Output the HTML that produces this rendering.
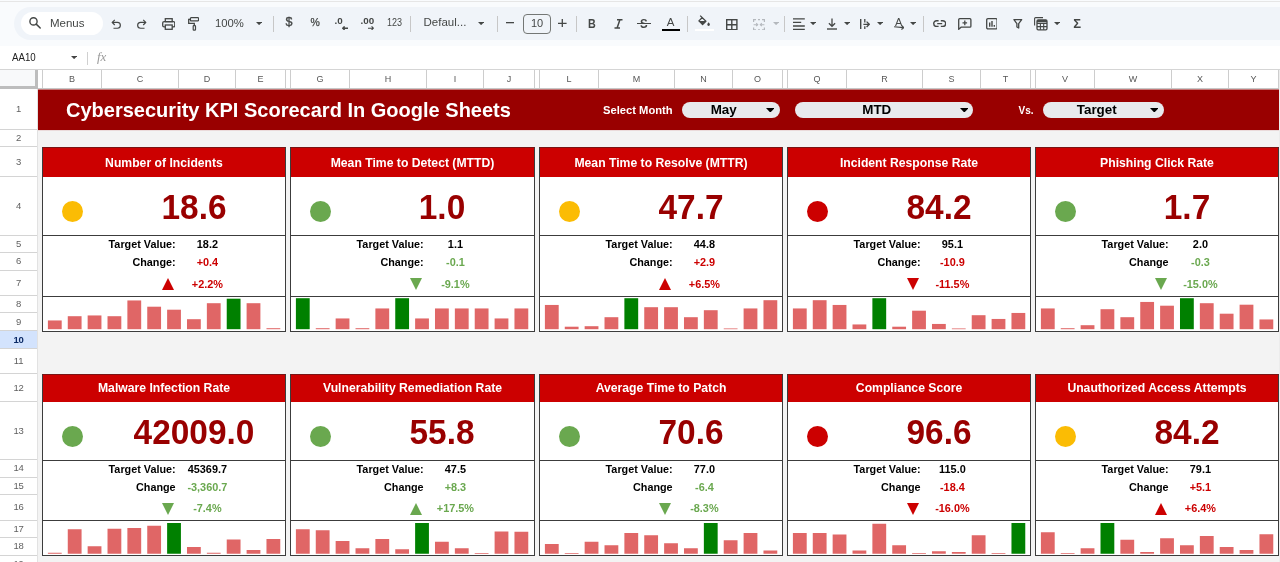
<!DOCTYPE html>
<html lang="en"><head><meta charset="utf-8"><title>Cybersecurity KPI Scorecard In Google Sheets</title>
<style>
html,body{margin:0;padding:0;}
body{width:1280px;height:562px;overflow:hidden;background:#fff;font-family:"Liberation Sans", Arial, sans-serif;position:relative;color:#000;}
.abs{position:absolute;}
#page{position:absolute;left:0;top:0;width:1280px;height:562px;overflow:hidden;will-change:transform;}
.t,.colh,.rowh,.hd{-webkit-font-smoothing:antialiased;}
.t{position:absolute;white-space:nowrap;line-height:1;}
.c{transform:translateX(-50%);}
.big.c{transform:translateX(-50%) scaleX(0.975);}
.r{transform:translateX(-100%);}
.tb{position:absolute;left:14px;top:7px;width:1300px;height:33px;background:#f0f4f9;border-radius:17px 0 0 17px;}
.colh{position:absolute;top:70px;height:19px;border-right:1px solid #cdcdcd;box-sizing:border-box;font-size:9px;color:#575757;text-align:center;line-height:19px;background:#fff;}
.rowh{position:absolute;left:0;width:37px;border-bottom:1px solid #d4d4d4;box-sizing:border-box;font-size:9.5px;color:#5f5f5f;text-align:center;background:#fff;letter-spacing:-0.3px;}
.card{position:absolute;box-sizing:border-box;border:1px solid #3c3c3c;border-top-color:#7a1414;background:#fff;}
.hd{position:absolute;left:0;right:0;top:0;background:#cc0000;color:#fff;font-weight:bold;font-size:12.2px;text-align:center;}
.ln{position:absolute;left:0;right:0;height:1px;background:#3c3c3c;}
.big{font-weight:bold;color:#990000;font-size:34.3px;}
.lab{font-weight:bold;font-size:10.8px;color:#000;}
.val{font-weight:bold;font-size:10.9px;}
.bar{position:absolute;background:#e06666;}
.pill{position:absolute;background:#e8eaed;border-radius:8px;height:15.5px;top:102px;}
.ico{position:absolute;}
.sep{position:absolute;top:16px;width:1px;height:16px;background:#c7c7c7;}

</style></head><body><div id="page">
<div class="abs" style="left:0;top:0;width:1280px;height:46px;background:#f9fbfd;"></div>
<div class="abs" style="left:0;top:1px;width:1280px;height:1px;background:#e6e6e6;"></div>
<div class="tb"></div>
<div class="abs" style="left:20.5px;top:12px;width:82px;height:23px;background:#fff;border-radius:12px;"></div>
<svg class="ico" style="left:28px;top:16.4px" width="14" height="14" viewBox="0 0 14 14"><circle cx="5.5" cy="5.4" r="3.6" fill="none" stroke="#444746" stroke-width="1.4"/><path d="M8.2 8.1L12.2 12.0" stroke="#444746" stroke-width="1.5" stroke-linecap="round"/></svg>
<div class="t" style="left:50px;top:18.1px;font-size:11.5px;color:#444746;">Menus</div>
<svg class="ico" style="left:111.2px;top:18.4px" width="11" height="11" viewBox="0 0 11 12"><path d="M1 4.8H6.5a3.2 3.2 0 0 1 0 6.4H2.2" fill="none" stroke="#444746" stroke-width="1.3"/><path d="M3.6 2L0.9 4.8L3.6 7.6" fill="none" stroke="#444746" stroke-width="1.3"/></svg>
<svg class="ico" style="left:136px;top:18.4px" width="11" height="11" viewBox="0 0 11 12"><path d="M10 4.8H4.5a3.2 3.2 0 0 0 0 6.4H8.8" fill="none" stroke="#444746" stroke-width="1.3"/><path d="M7.4 2L10.1 4.8L7.4 7.6" fill="none" stroke="#444746" stroke-width="1.3"/></svg>
<svg class="ico" style="left:161.5px;top:18px" width="13.5" height="12" viewBox="0 0 13.5 12"><rect x="3.3" y="0.7" width="6.9" height="3" fill="none" stroke="#444746" stroke-width="1.3"/><rect x="0.7" y="3.7" width="12.1" height="5.2" rx="1.4" fill="none" stroke="#444746" stroke-width="1.3"/><rect x="3.3" y="7" width="6.9" height="4.3" fill="#f0f4f9" stroke="#444746" stroke-width="1.3"/></svg>
<svg class="ico" style="left:187.5px;top:17px" width="11.5" height="14" viewBox="0 0 11.5 14"><rect x="2.4" y="0.7" width="8.2" height="3.2" rx="0.8" fill="none" stroke="#444746" stroke-width="1.3"/><path d="M2.4 2.3H0.7V6.3H6.3V8.6" fill="none" stroke="#444746" stroke-width="1.3"/><rect x="5.2" y="8.6" width="2.3" height="4.6" rx="0.6" fill="none" stroke="#444746" stroke-width="1.2"/></svg>
<div class="t" style="left:215px;top:17.5px;font-size:11.3px;color:#444746;">100%</div>
<svg class="ico" style="left:255.5px;top:22px" width="6.2" height="3.2" viewBox="0 0 6.2 3.2"><path d="M0 0h6.2L3.1 3.2z" fill="#444746"/></svg>
<div class="sep" style="left:273px;"></div>
<div class="t" style="left:285.6px;top:16px;font-size:12.5px;color:#444746;-webkit-text-stroke:0.35px #444746;">$</div>
<div class="t" style="left:310.5px;top:17px;font-size:10.5px;color:#444746;-webkit-text-stroke:0.25px #444746;">%</div>
<div class="t" style="left:334.6px;top:16px;font-size:9.8px;color:#444746;font-weight:bold;letter-spacing:0px;">.0</div>
<svg class="ico" style="left:342px;top:26px" width="6.2" height="4.4" viewBox="0 0 6.2 4.4"><path d="M6.2 2.2H1M2.6 0.4L0.8 2.2L2.6 4" fill="none" stroke="#444746" stroke-width="1.4"/></svg>
<div class="t" style="left:360.6px;top:16px;font-size:9.8px;color:#444746;font-weight:bold;letter-spacing:0px;">.00</div>
<svg class="ico" style="left:367.5px;top:26px" width="6.2" height="4.4" viewBox="0 0 6.2 4.4"><path d="M0 2.2H5.2M3.6 0.4L5.4 2.2L3.6 4" fill="none" stroke="#444746" stroke-width="1.1"/></svg>
<div class="t" style="left:387.2px;top:18.2px;font-size:10px;color:#444746;transform-origin:0 0;transform:scaleX(0.9);">123</div>
<div class="sep" style="left:410px;"></div>
<div class="t" style="left:423.5px;top:17px;font-size:11.5px;color:#444746;">Defaul...</div>
<svg class="ico" style="left:478px;top:22px" width="6.2" height="3.2" viewBox="0 0 6.2 3.2"><path d="M0 0h6.2L3.1 3.2z" fill="#444746"/></svg>
<div class="sep" style="left:497px;"></div>
<svg class="ico" style="left:506px;top:22.3px" width="8" height="1.3" viewBox="0 0 8 1.3"><rect width="8" height="1.3" fill="#444746"/></svg>
<div class="abs" style="left:523px;top:14px;width:27.5px;height:19.5px;box-sizing:border-box;border:1px solid #747775;border-radius:4px;"></div>
<div class="t" style="left:531px;top:18px;font-size:11px;color:#444746;">10</div>
<svg class="ico" style="left:558px;top:18.8px" width="8.6" height="8.6" viewBox="0 0 8.6 8.6"><path d="M4.3 0V8.6M0 4.3H8.6" stroke="#444746" stroke-width="1.3"/></svg>
<div class="sep" style="left:576px;"></div>
<div class="t" style="left:588.2px;top:18.1px;font-size:12.2px;color:#444746;font-weight:bold;transform-origin:0 0;transform:scaleX(0.88);">B</div>
<svg class="ico" style="left:613.5px;top:19px" width="9" height="9.6" viewBox="0 0 9 9.6"><path d="M3 0.65H8.5M0.5 8.95H6M5.9 0.65L3.1 8.95" fill="none" stroke="#444746" stroke-width="1.5"/></svg>
<div class="t" style="left:639.9px;top:16.8px;font-size:13.5px;color:#444746;font-weight:bold;transform-origin:0 0;transform:scaleX(0.85);">S</div>
<div class="abs" style="left:637px;top:22.5px;width:13.5px;height:1.2px;background:#444746;"></div>
<div class="abs" style="left:640px;top:23.7px;width:8px;height:1.1px;background:#f0f4f9;"></div>
<div class="t" style="left:666.8px;top:16.7px;font-size:11.5px;color:#444746;">A</div>
<div class="abs" style="left:662px;top:28.5px;width:18px;height:2.8px;background:#000;"></div>
<div class="sep" style="left:687px;"></div>
<svg class="ico" style="left:697.5px;top:15px" width="12.5" height="11.5" viewBox="0 0 12.5 11.5"><path d="M2.2 0.6L7.9 6.3L4.6 9.6L0.9 5.9L4.6 2.2" fill="none" stroke="#444746" stroke-width="1.3" stroke-linejoin="round"/><path d="M1.2 6.1H8L4.6 9.5z" fill="#444746"/><path d="M10.6 7.3c0.8 1 1.3 1.7 1.3 2.3a1.3 1.3 0 0 1 -2.6 0c0-0.6 0.5-1.3 1.3-2.3z" fill="#444746"/></svg>
<div class="abs" style="left:695px;top:28.5px;width:18.5px;height:2.8px;background:#fff;"></div>
<svg class="ico" style="left:726px;top:18.5px" width="11.6" height="11.4" viewBox="0 0 11.6 11.4"><rect x="0.7" y="0.7" width="10.2" height="10" fill="none" stroke="#444746" stroke-width="1.4"/><path d="M5.8 0.7V10.7M0.7 5.7H10.9" stroke="#444746" stroke-width="1.4"/></svg>
<svg class="ico" style="left:752.8px;top:18.5px" width="12" height="11.4" viewBox="0 0 12 11.4"><path d="M0.6 3V0.6H3M5 0.6H7M9 0.6H11.4V3M11.4 8.4V10.8H9M7 10.8H5M3 10.8H0.6V8.4" fill="none" stroke="#b4b8bd" stroke-width="1.2"/><path d="M0.6 5.7H4.6M3.2 4.2L4.7 5.7L3.2 7.2M11.4 5.7H7.4M8.8 4.2L7.3 5.7L8.8 7.2" fill="none" stroke="#b4b8bd" stroke-width="1.1"/></svg>
<svg class="ico" style="left:772.5px;top:22px" width="6.2" height="3.2" viewBox="0 0 6.2 3.2"><path d="M0 0h6.2L3.1 3.2z" fill="#b4b8bd"/></svg>
<div class="sep" style="left:784px;"></div>
<svg class="ico" style="left:793px;top:18px" width="11.8" height="12" viewBox="0 0 11.8 12"><path d="M0 0.9H11.8M0 4.4H8.2M0 8H11.8M0 11.4H11.8" stroke="#444746" stroke-width="1.3"/></svg>
<svg class="ico" style="left:810.3px;top:22px" width="6.2" height="3.2" viewBox="0 0 6.2 3.2"><path d="M0 0h6.2L3.1 3.2z" fill="#444746"/></svg>
<svg class="ico" style="left:826.6px;top:18px" width="10" height="12" viewBox="0 0 10 12"><path d="M5 0.4V8M1.9 5.2L5 8.3L8.1 5.2" fill="none" stroke="#444746" stroke-width="1.3"/><path d="M0 11H10" stroke="#444746" stroke-width="1.4"/></svg>
<svg class="ico" style="left:844px;top:22px" width="6.2" height="3.2" viewBox="0 0 6.2 3.2"><path d="M0 0h6.2L3.1 3.2z" fill="#444746"/></svg>
<svg class="ico" style="left:860px;top:18.6px" width="10.2" height="10.6" viewBox="0 0 10.2 10.6"><path d="M0.7 0V10.6" stroke="#444746" stroke-width="1.4"/><path d="M4.8 0V3.4M4.8 7.2V10.6" stroke="#444746" stroke-width="1.3"/><path d="M3.4 5.3H9M6.6 2.6L9.3 5.3L6.6 8" fill="none" stroke="#444746" stroke-width="1.3"/></svg>
<svg class="ico" style="left:877.3px;top:22px" width="6.2" height="3.2" viewBox="0 0 6.2 3.2"><path d="M0 0h6.2L3.1 3.2z" fill="#444746"/></svg>
<div class="t" style="left:895px;top:16.6px;font-size:11px;color:#444746;">A</div>
<svg class="ico" style="left:893.5px;top:25.4px" width="10.8" height="4.4" viewBox="0 0 10.8 4.4"><path d="M0 2.2H9.6M7.6 0.3L9.8 2.3L7.6 4.2" fill="none" stroke="#444746" stroke-width="1.2" transform="rotate(5 5 2.2)"/></svg>
<svg class="ico" style="left:910px;top:22px" width="6.2" height="3.2" viewBox="0 0 6.2 3.2"><path d="M0 0h6.2L3.1 3.2z" fill="#444746"/></svg>
<div class="sep" style="left:923px;"></div>
<svg class="ico" style="left:933px;top:20.2px" width="13.4" height="7.2" viewBox="0 0 13.4 7.2"><path d="M5.6 0.7H3.6a2.9 2.9 0 0 0 0 5.8H5.6M7.8 0.7H9.8a2.9 2.9 0 0 1 0 5.8H7.8M4.2 3.6H9.2" fill="none" stroke="#444746" stroke-width="1.4"/></svg>
<svg class="ico" style="left:958px;top:18px" width="13.6" height="12.2" viewBox="0 0 13.6 12.2"><path d="M0.7 11.4V1.7a1 1 0 0 1 1-1H11.9a1 1 0 0 1 1 1V8.2a1 1 0 0 1 -1 1H3z" fill="none" stroke="#444746" stroke-width="1.3" stroke-linejoin="round"/><path d="M6.8 2.6V7.2M4.5 4.9H9.1" stroke="#444746" stroke-width="1.3"/></svg>
<svg class="ico" style="left:985.5px;top:18px" width="11.8" height="11.6" viewBox="0 0 11.8 11.6"><rect x="0.7" y="0.7" width="10.4" height="10.2" rx="1.2" fill="none" stroke="#444746" stroke-width="1.3"/><path d="M3.7 4.4V8.8M6 3V8.8M8.3 6.9V8.8" stroke="#444746" stroke-width="1.4"/></svg>
<svg class="ico" style="left:1013px;top:19px" width="9.6" height="10" viewBox="0 0 9.6 10"><path d="M0.9 0.7H8.7L5.7 4.6V9L3.9 8V4.6z" fill="none" stroke="#444746" stroke-width="1.3" stroke-linejoin="round"/></svg>
<svg class="ico" style="left:1034.3px;top:17.4px" width="13.6" height="13.4" viewBox="0 0 13.6 13.4"><path d="M0.6 8.6V1.6a1 1 0 0 1 1-1H9" fill="none" stroke="#444746" stroke-width="1.1"/><rect x="3" y="3" width="10" height="9.8" rx="1.2" fill="none" stroke="#444746" stroke-width="1.3"/><path d="M3 6.4H13M3 9.6H13M6.4 6.4V12.8M9.7 6.4V12.8" stroke="#444746" stroke-width="1.1"/><rect x="3" y="3" width="10" height="2.2" fill="#444746"/></svg>
<svg class="ico" style="left:1053.5px;top:22px" width="6.2" height="3.2" viewBox="0 0 6.2 3.2"><path d="M0 0h6.2L3.1 3.2z" fill="#444746"/></svg>
<div class="t" style="left:1073.3px;top:16.6px;font-size:13px;color:#444746;font-weight:bold;">Σ</div>
<div class="abs" style="left:0;top:46px;width:1280px;height:23px;background:#fff;"></div>
<div class="t" style="left:12px;top:53.2px;font-size:10px;color:#222;transform-origin:0 0;transform:scaleX(0.97);">AA10</div>
<svg class="ico" style="left:70.5px;top:56px" width="6.2" height="3.2" viewBox="0 0 6.2 3.2"><path d="M0 0h6.2L3.1 3.2z" fill="#444"/></svg>
<div class="abs" style="left:87px;top:52px;width:1px;height:13px;background:#d0d0d0;"></div>
<div class="t" style="left:97px;top:50px;font-size:13px;color:#9a9a9a;font-style:italic;font-family:'Liberation Serif',serif;">fx</div>
<div class="abs" style="left:0;top:69px;width:1280px;height:1px;background:#d5d5d5;"></div>
<div class="abs" style="left:38px;top:89px;width:1242px;height:473px;background:#f3f3f3;"></div>
<div class="abs" style="left:0;top:70px;width:38px;height:19px;background:#f8f9fa;border-right:3px solid #bdbdbd;border-bottom:3px solid #bdbdbd;box-sizing:border-box;"></div>
<div class="colh" style="left:39px;width:4px;"></div>
<div class="colh" style="left:43px;width:59px;">B</div>
<div class="colh" style="left:102px;width:77px;">C</div>
<div class="colh" style="left:179px;width:57px;">D</div>
<div class="colh" style="left:236px;width:50px;">E</div>
<div class="colh" style="left:286px;width:5px;"></div>
<div class="colh" style="left:291px;width:59px;">G</div>
<div class="colh" style="left:350px;width:77px;">H</div>
<div class="colh" style="left:427px;width:57px;">I</div>
<div class="colh" style="left:484px;width:51px;">J</div>
<div class="colh" style="left:535px;width:5px;"></div>
<div class="colh" style="left:540px;width:59px;">L</div>
<div class="colh" style="left:599px;width:76px;">M</div>
<div class="colh" style="left:675px;width:58px;">N</div>
<div class="colh" style="left:733px;width:50px;">O</div>
<div class="colh" style="left:783px;width:5px;"></div>
<div class="colh" style="left:788px;width:59px;">Q</div>
<div class="colh" style="left:847px;width:76px;">R</div>
<div class="colh" style="left:923px;width:58px;">S</div>
<div class="colh" style="left:981px;width:50px;">T</div>
<div class="colh" style="left:1031px;width:5px;"></div>
<div class="colh" style="left:1036px;width:59px;">V</div>
<div class="colh" style="left:1095px;width:77px;">W</div>
<div class="colh" style="left:1172px;width:57px;">X</div>
<div class="colh" style="left:1229px;width:50px;">Y</div>
<div class="abs" style="left:38px;top:88px;width:1242px;height:1px;background:#c7c7c7;"></div>
<div class="rowh" style="top:89px;height:41px;line-height:40px;">1</div>
<div class="rowh" style="top:130px;height:17px;line-height:16px;">2</div>
<div class="rowh" style="top:147px;height:30px;line-height:29px;">3</div>
<div class="rowh" style="top:177px;height:58.5px;line-height:57.5px;">4</div>
<div class="rowh" style="top:235.5px;height:17.5px;line-height:16.5px;">5</div>
<div class="rowh" style="top:253px;height:17.5px;line-height:16.5px;">6</div>
<div class="rowh" style="top:270.5px;height:25.5px;line-height:24.5px;">7</div>
<div class="rowh" style="top:296px;height:17px;line-height:16px;">8</div>
<div class="rowh" style="top:313px;height:18px;line-height:17px;">9</div>
<div class="rowh" style="top:331px;height:18px;line-height:17px;background:#d3e3fd;font-weight:bold;color:#0b2a66;">10</div>
<div class="rowh" style="top:349px;height:25px;line-height:24px;">11</div>
<div class="rowh" style="top:374px;height:28px;line-height:27px;">12</div>
<div class="rowh" style="top:402px;height:58px;line-height:57px;">13</div>
<div class="rowh" style="top:460px;height:17.5px;line-height:16.5px;">14</div>
<div class="rowh" style="top:477.5px;height:17.5px;line-height:16.5px;">15</div>
<div class="rowh" style="top:495px;height:25.5px;line-height:24.5px;">16</div>
<div class="rowh" style="top:520.5px;height:17.5px;line-height:16.5px;">17</div>
<div class="rowh" style="top:538px;height:17.5px;line-height:16.5px;">18</div>
<div class="rowh" style="top:555.5px;height:17.5px;line-height:16.5px;">19</div>
<div class="abs" style="left:37px;top:89px;width:1px;height:473px;background:#e2e2e2;"></div>
<svg class="ico" style="left:38px;top:88px" width="1242" height="44" viewBox="0 0 1242 44"><rect x="0" y="1.5" width="1241" height="40.6" fill="#990000"/></svg>
<div class="abs" style="left:1279px;top:70px;width:1px;height:492px;background:#ececec;"></div>
<div class="t" id="title" style="left:66px;top:100.8px;font-size:19.3px;font-weight:bold;color:#fff;transform-origin:0 0;transform:scaleX(1.038);">Cybersecurity KPI Scorecard In Google Sheets</div>
<div class="t" id="selm" style="left:603px;top:104.8px;font-size:11.2px;font-weight:bold;color:#fff;">Select Month</div>
<div class="pill" style="left:681.5px;width:98px;"></div>
<div class="t c" id="p1" style="left:723.75px;top:103.4px;font-size:13.4px;font-weight:bold;color:#000;">May</div>
<svg class="ico" style="left:765.5px;top:107.6px" width="8.6" height="4.6" viewBox="0 0 8.6 4.6"><path d="M0 0h8.6L4.3 4.6z" fill="#000"/></svg>
<div class="pill" style="left:795px;width:178px;"></div>
<div class="t c" id="p2" style="left:876.75px;top:103.4px;font-size:13.4px;font-weight:bold;color:#000;">MTD</div>
<svg class="ico" style="left:959.5px;top:107.6px" width="8.6" height="4.6" viewBox="0 0 8.6 4.6"><path d="M0 0h8.6L4.3 4.6z" fill="#000"/></svg>
<div class="t" id="vs" style="left:1018.5px;top:105.6px;font-size:10px;font-weight:bold;color:#fff;">Vs.</div>
<div class="pill" style="left:1043.25px;width:120.75px;"></div>
<div class="t c" id="p3" style="left:1096.75px;top:103.4px;font-size:13.4px;font-weight:bold;color:#000;">Target</div>
<svg class="ico" style="left:1149.5px;top:107.6px" width="8.6" height="4.6" viewBox="0 0 8.6 4.6"><path d="M0 0h8.6L4.3 4.6z" fill="#000"/></svg>
<div class="card" style="left:42px;top:147px;width:244px;height:185px;">
<div class="hd" style="height:29px;line-height:31px;">Number of Incidents</div>
<div class="ln" style="top:87px;"></div>
<div class="ln" style="top:148px;"></div>
<div class="abs" style="left:18.5px;top:52.5px;width:21px;height:21px;border-radius:50%;background:#fbbc04;"></div>
<div class="t c big" style="left:150.5px;top:42.1px;">18.6</div>
<div class="t r lab" style="left:132.6px;top:91.4px;">Target Value:</div>
<div class="t c val" style="left:164.4px;top:91.4px;color:#000;">18.2</div>
<div class="t r lab" style="left:132.6px;top:108.9px;">Change:</div>
<div class="t c val" style="left:164.4px;top:108.9px;color:#cc0000;">+0.4</div>
<svg class="ico" style="left:118.6px;top:130.1px" width="12" height="12" viewBox="0 0 12 12"><path d="M0 12L6 0L12 12z" fill="#cc0000"/></svg>
<div class="t c val" style="left:164.4px;top:130.9px;color:#cc0000;">+2.2%</div>
<svg class="ico" style="left:0;top:0" width="242" height="183" viewBox="0 0 242 183"><rect x="4.9" y="172.45" width="13.8" height="8.75" fill="#e06666"/><rect x="24.77" y="168.2" width="13.8" height="13" fill="#e06666"/><rect x="44.64" y="167.45" width="13.8" height="13.75" fill="#e06666"/><rect x="64.51" y="168.2" width="13.8" height="13" fill="#e06666"/><rect x="84.38" y="152.45" width="13.8" height="28.75" fill="#e06666"/><rect x="104.25" y="158.7" width="13.8" height="22.5" fill="#e06666"/><rect x="124.12" y="161.7" width="13.8" height="19.5" fill="#e06666"/><rect x="143.99" y="171.2" width="13.8" height="10" fill="#e06666"/><rect x="163.86" y="155.2" width="13.8" height="26" fill="#e06666"/><rect x="183.73" y="150.7" width="13.8" height="30.5" fill="#008000"/><rect x="203.6" y="155.2" width="13.8" height="26" fill="#e06666"/><rect x="223.47" y="180.2" width="13.8" height="1" fill="#e06666"/></svg>
</div>
<div class="card" style="left:290px;top:147px;width:245px;height:185px;">
<div class="hd" style="height:29px;line-height:31px;">Mean Time to Detect (MTTD)</div>
<div class="ln" style="top:87px;"></div>
<div class="ln" style="top:148px;"></div>
<div class="abs" style="left:18.5px;top:52.5px;width:21px;height:21px;border-radius:50%;background:#6aa84f;"></div>
<div class="t c big" style="left:150.5px;top:42.1px;">1.0</div>
<div class="t r lab" style="left:132.6px;top:91.4px;">Target Value:</div>
<div class="t c val" style="left:164.4px;top:91.4px;color:#000;">1.1</div>
<div class="t r lab" style="left:132.6px;top:108.9px;">Change:</div>
<div class="t c val" style="left:164.4px;top:108.9px;color:#6aa84f;">-0.1</div>
<svg class="ico" style="left:118.6px;top:130.1px" width="12" height="12" viewBox="0 0 12 12"><path d="M0 0H12L6 12z" fill="#6aa84f"/></svg>
<div class="t c val" style="left:164.4px;top:130.9px;color:#6aa84f;">-9.1%</div>
<svg class="ico" style="left:0;top:0" width="243" height="183" viewBox="0 0 243 183"><rect x="4.9" y="150.2" width="13.8" height="31" fill="#008000"/><rect x="24.77" y="180.2" width="13.8" height="1" fill="#e06666"/><rect x="44.64" y="170.45" width="13.8" height="10.75" fill="#e06666"/><rect x="64.51" y="180.2" width="13.8" height="1" fill="#e06666"/><rect x="84.38" y="160.45" width="13.8" height="20.75" fill="#e06666"/><rect x="104.25" y="150.2" width="13.8" height="31" fill="#008000"/><rect x="124.12" y="170.45" width="13.8" height="10.75" fill="#e06666"/><rect x="143.99" y="160.45" width="13.8" height="20.75" fill="#e06666"/><rect x="163.86" y="160.45" width="13.8" height="20.75" fill="#e06666"/><rect x="183.73" y="160.45" width="13.8" height="20.75" fill="#e06666"/><rect x="203.6" y="170.45" width="13.8" height="10.75" fill="#e06666"/><rect x="223.47" y="160.45" width="13.8" height="20.75" fill="#e06666"/></svg>
</div>
<div class="card" style="left:539px;top:147px;width:244px;height:185px;">
<div class="hd" style="height:29px;line-height:31px;">Mean Time to Resolve (MTTR)</div>
<div class="ln" style="top:87px;"></div>
<div class="ln" style="top:148px;"></div>
<div class="abs" style="left:18.5px;top:52.5px;width:21px;height:21px;border-radius:50%;background:#fbbc04;"></div>
<div class="t c big" style="left:150.5px;top:42.1px;">47.7</div>
<div class="t r lab" style="left:132.6px;top:91.4px;">Target Value:</div>
<div class="t c val" style="left:164.4px;top:91.4px;color:#000;">44.8</div>
<div class="t r lab" style="left:132.6px;top:108.9px;">Change:</div>
<div class="t c val" style="left:164.4px;top:108.9px;color:#cc0000;">+2.9</div>
<svg class="ico" style="left:118.6px;top:130.1px" width="12" height="12" viewBox="0 0 12 12"><path d="M0 12L6 0L12 12z" fill="#cc0000"/></svg>
<div class="t c val" style="left:164.4px;top:130.9px;color:#cc0000;">+6.5%</div>
<svg class="ico" style="left:0;top:0" width="242" height="183" viewBox="0 0 242 183"><rect x="4.9" y="156.95" width="13.8" height="24.25" fill="#e06666"/><rect x="24.77" y="178.7" width="13.8" height="2.5" fill="#e06666"/><rect x="44.64" y="178.2" width="13.8" height="3" fill="#e06666"/><rect x="64.51" y="169.2" width="13.8" height="12" fill="#e06666"/><rect x="84.38" y="150.2" width="13.8" height="31" fill="#008000"/><rect x="104.25" y="159.2" width="13.8" height="22" fill="#e06666"/><rect x="124.12" y="159.2" width="13.8" height="22" fill="#e06666"/><rect x="143.99" y="169.2" width="13.8" height="12" fill="#e06666"/><rect x="163.86" y="162.2" width="13.8" height="19" fill="#e06666"/><rect x="183.73" y="180.45" width="13.8" height="0.75" fill="#e06666"/><rect x="203.6" y="160.45" width="13.8" height="20.75" fill="#e06666"/><rect x="223.47" y="152.2" width="13.8" height="29" fill="#e06666"/></svg>
</div>
<div class="card" style="left:787px;top:147px;width:244px;height:185px;">
<div class="hd" style="height:29px;line-height:31px;">Incident Response Rate</div>
<div class="ln" style="top:87px;"></div>
<div class="ln" style="top:148px;"></div>
<div class="abs" style="left:18.5px;top:52.5px;width:21px;height:21px;border-radius:50%;background:#cc0000;"></div>
<div class="t c big" style="left:150.5px;top:42.1px;">84.2</div>
<div class="t r lab" style="left:132.6px;top:91.4px;">Target Value:</div>
<div class="t c val" style="left:164.4px;top:91.4px;color:#000;">95.1</div>
<div class="t r lab" style="left:132.6px;top:108.9px;">Change:</div>
<div class="t c val" style="left:164.4px;top:108.9px;color:#cc0000;">-10.9</div>
<svg class="ico" style="left:118.6px;top:130.1px" width="12" height="12" viewBox="0 0 12 12"><path d="M0 0H12L6 12z" fill="#cc0000"/></svg>
<div class="t c val" style="left:164.4px;top:130.9px;color:#cc0000;">-11.5%</div>
<svg class="ico" style="left:0;top:0" width="242" height="183" viewBox="0 0 242 183"><rect x="4.9" y="160.45" width="13.8" height="20.75" fill="#e06666"/><rect x="24.77" y="152.2" width="13.8" height="29" fill="#e06666"/><rect x="44.64" y="156.95" width="13.8" height="24.25" fill="#e06666"/><rect x="64.51" y="176.45" width="13.8" height="4.75" fill="#e06666"/><rect x="84.38" y="150.2" width="13.8" height="31" fill="#008000"/><rect x="104.25" y="178.7" width="13.8" height="2.5" fill="#e06666"/><rect x="124.12" y="162.7" width="13.8" height="18.5" fill="#e06666"/><rect x="143.99" y="175.95" width="13.8" height="5.25" fill="#e06666"/><rect x="163.86" y="180.45" width="13.8" height="0.75" fill="#e06666"/><rect x="183.73" y="167.2" width="13.8" height="14" fill="#e06666"/><rect x="203.6" y="170.95" width="13.8" height="10.25" fill="#e06666"/><rect x="223.47" y="164.95" width="13.8" height="16.25" fill="#e06666"/></svg>
</div>
<div class="card" style="left:1035px;top:147px;width:244px;height:185px;">
<div class="hd" style="height:29px;line-height:31px;">Phishing Click Rate</div>
<div class="ln" style="top:87px;"></div>
<div class="ln" style="top:148px;"></div>
<div class="abs" style="left:18.5px;top:52.5px;width:21px;height:21px;border-radius:50%;background:#6aa84f;"></div>
<div class="t c big" style="left:150.5px;top:42.1px;">1.7</div>
<div class="t r lab" style="left:132.6px;top:91.4px;">Target Value:</div>
<div class="t c val" style="left:164.4px;top:91.4px;color:#000;">2.0</div>
<div class="t r lab" style="left:132.6px;top:108.9px;">Change</div>
<div class="t c val" style="left:164.4px;top:108.9px;color:#6aa84f;">-0.3</div>
<svg class="ico" style="left:118.6px;top:130.1px" width="12" height="12" viewBox="0 0 12 12"><path d="M0 0H12L6 12z" fill="#6aa84f"/></svg>
<div class="t c val" style="left:164.4px;top:130.9px;color:#6aa84f;">-15.0%</div>
<svg class="ico" style="left:0;top:0" width="242" height="183" viewBox="0 0 242 183"><rect x="4.9" y="160.45" width="13.8" height="20.75" fill="#e06666"/><rect x="24.77" y="180.2" width="13.8" height="1" fill="#e06666"/><rect x="44.64" y="177.2" width="13.8" height="4" fill="#e06666"/><rect x="64.51" y="161.2" width="13.8" height="20" fill="#e06666"/><rect x="84.38" y="169.2" width="13.8" height="12" fill="#e06666"/><rect x="104.25" y="153.95" width="13.8" height="27.25" fill="#e06666"/><rect x="124.12" y="157.7" width="13.8" height="23.5" fill="#e06666"/><rect x="143.99" y="150.2" width="13.8" height="31" fill="#008000"/><rect x="163.86" y="155.2" width="13.8" height="26" fill="#e06666"/><rect x="183.73" y="165.7" width="13.8" height="15.5" fill="#e06666"/><rect x="203.6" y="156.7" width="13.8" height="24.5" fill="#e06666"/><rect x="223.47" y="171.45" width="13.8" height="9.75" fill="#e06666"/></svg>
</div>
<div class="card" style="left:42px;top:374px;width:244px;height:182px;">
<div class="hd" style="height:27px;line-height:27.5px;">Malware Infection Rate</div>
<div class="ln" style="top:85px;"></div>
<div class="ln" style="top:145px;"></div>
<div class="abs" style="left:18.5px;top:50.5px;width:21px;height:21px;border-radius:50%;background:#6aa84f;"></div>
<div class="t c big" style="left:150.5px;top:40.1px;">42009.0</div>
<div class="t r lab" style="left:132.6px;top:89px;">Target Value:</div>
<div class="t c val" style="left:164.4px;top:89px;color:#000;">45369.7</div>
<div class="t r lab" style="left:132.6px;top:106.5px;">Change</div>
<div class="t c val" style="left:164.4px;top:106.5px;color:#6aa84f;">-3,360.7</div>
<svg class="ico" style="left:118.6px;top:127.6px" width="12" height="12" viewBox="0 0 12 12"><path d="M0 0H12L6 12z" fill="#6aa84f"/></svg>
<div class="t c val" style="left:164.4px;top:128.4px;color:#6aa84f;">-7.4%</div>
<svg class="ico" style="left:0;top:0" width="242" height="180" viewBox="0 0 242 180"><rect x="4.9" y="177.75" width="13.8" height="1" fill="#e06666"/><rect x="24.77" y="154.25" width="13.8" height="24.5" fill="#e06666"/><rect x="44.64" y="171.25" width="13.8" height="7.5" fill="#e06666"/><rect x="64.51" y="153.75" width="13.8" height="25" fill="#e06666"/><rect x="84.38" y="153" width="13.8" height="25.75" fill="#e06666"/><rect x="104.25" y="150.75" width="13.8" height="28" fill="#e06666"/><rect x="124.12" y="148" width="13.8" height="30.75" fill="#008000"/><rect x="143.99" y="172" width="13.8" height="6.75" fill="#e06666"/><rect x="163.86" y="177.75" width="13.8" height="1" fill="#e06666"/><rect x="183.73" y="164.5" width="13.8" height="14.25" fill="#e06666"/><rect x="203.6" y="175" width="13.8" height="3.75" fill="#e06666"/><rect x="223.47" y="164" width="13.8" height="14.75" fill="#e06666"/></svg>
</div>
<div class="card" style="left:290px;top:374px;width:245px;height:182px;">
<div class="hd" style="height:27px;line-height:27.5px;">Vulnerability Remediation Rate</div>
<div class="ln" style="top:85px;"></div>
<div class="ln" style="top:145px;"></div>
<div class="abs" style="left:18.5px;top:50.5px;width:21px;height:21px;border-radius:50%;background:#6aa84f;"></div>
<div class="t c big" style="left:150.5px;top:40.1px;">55.8</div>
<div class="t r lab" style="left:132.6px;top:89px;">Target Value:</div>
<div class="t c val" style="left:164.4px;top:89px;color:#000;">47.5</div>
<div class="t r lab" style="left:132.6px;top:106.5px;">Change</div>
<div class="t c val" style="left:164.4px;top:106.5px;color:#6aa84f;">+8.3</div>
<svg class="ico" style="left:118.6px;top:127.6px" width="12" height="12" viewBox="0 0 12 12"><path d="M0 12L6 0L12 12z" fill="#6aa84f"/></svg>
<div class="t c val" style="left:164.4px;top:128.4px;color:#6aa84f;">+17.5%</div>
<svg class="ico" style="left:0;top:0" width="243" height="180" viewBox="0 0 243 180"><rect x="4.9" y="154.25" width="13.8" height="24.5" fill="#e06666"/><rect x="24.77" y="155.25" width="13.8" height="23.5" fill="#e06666"/><rect x="44.64" y="166" width="13.8" height="12.75" fill="#e06666"/><rect x="64.51" y="173.25" width="13.8" height="5.5" fill="#e06666"/><rect x="84.38" y="164" width="13.8" height="14.75" fill="#e06666"/><rect x="104.25" y="174.25" width="13.8" height="4.5" fill="#e06666"/><rect x="124.12" y="148" width="13.8" height="30.75" fill="#008000"/><rect x="143.99" y="166.75" width="13.8" height="12" fill="#e06666"/><rect x="163.86" y="173.25" width="13.8" height="5.5" fill="#e06666"/><rect x="183.73" y="178" width="13.8" height="0.75" fill="#e06666"/><rect x="203.6" y="156.5" width="13.8" height="22.25" fill="#e06666"/><rect x="223.47" y="156.75" width="13.8" height="22" fill="#e06666"/></svg>
</div>
<div class="card" style="left:539px;top:374px;width:244px;height:182px;">
<div class="hd" style="height:27px;line-height:27.5px;">Average Time to Patch</div>
<div class="ln" style="top:85px;"></div>
<div class="ln" style="top:145px;"></div>
<div class="abs" style="left:18.5px;top:50.5px;width:21px;height:21px;border-radius:50%;background:#6aa84f;"></div>
<div class="t c big" style="left:150.5px;top:40.1px;">70.6</div>
<div class="t r lab" style="left:132.6px;top:89px;">Target Value:</div>
<div class="t c val" style="left:164.4px;top:89px;color:#000;">77.0</div>
<div class="t r lab" style="left:132.6px;top:106.5px;">Change</div>
<div class="t c val" style="left:164.4px;top:106.5px;color:#6aa84f;">-6.4</div>
<svg class="ico" style="left:118.6px;top:127.6px" width="12" height="12" viewBox="0 0 12 12"><path d="M0 0H12L6 12z" fill="#6aa84f"/></svg>
<div class="t c val" style="left:164.4px;top:128.4px;color:#6aa84f;">-8.3%</div>
<svg class="ico" style="left:0;top:0" width="242" height="180" viewBox="0 0 242 180"><rect x="4.9" y="169" width="13.8" height="9.75" fill="#e06666"/><rect x="24.77" y="178" width="13.8" height="0.75" fill="#e06666"/><rect x="44.64" y="166.75" width="13.8" height="12" fill="#e06666"/><rect x="64.51" y="170.25" width="13.8" height="8.5" fill="#e06666"/><rect x="84.38" y="158" width="13.8" height="20.75" fill="#e06666"/><rect x="104.25" y="160.25" width="13.8" height="18.5" fill="#e06666"/><rect x="124.12" y="168.25" width="13.8" height="10.5" fill="#e06666"/><rect x="143.99" y="173.25" width="13.8" height="5.5" fill="#e06666"/><rect x="163.86" y="148" width="13.8" height="30.75" fill="#008000"/><rect x="183.73" y="165.25" width="13.8" height="13.5" fill="#e06666"/><rect x="203.6" y="158" width="13.8" height="20.75" fill="#e06666"/><rect x="223.47" y="175.5" width="13.8" height="3.25" fill="#e06666"/></svg>
</div>
<div class="card" style="left:787px;top:374px;width:244px;height:182px;">
<div class="hd" style="height:27px;line-height:27.5px;">Compliance Score</div>
<div class="ln" style="top:85px;"></div>
<div class="ln" style="top:145px;"></div>
<div class="abs" style="left:18.5px;top:50.5px;width:21px;height:21px;border-radius:50%;background:#cc0000;"></div>
<div class="t c big" style="left:150.5px;top:40.1px;">96.6</div>
<div class="t r lab" style="left:132.6px;top:89px;">Target Value:</div>
<div class="t c val" style="left:164.4px;top:89px;color:#000;">115.0</div>
<div class="t r lab" style="left:132.6px;top:106.5px;">Change</div>
<div class="t c val" style="left:164.4px;top:106.5px;color:#cc0000;">-18.4</div>
<svg class="ico" style="left:118.6px;top:127.6px" width="12" height="12" viewBox="0 0 12 12"><path d="M0 0H12L6 12z" fill="#cc0000"/></svg>
<div class="t c val" style="left:164.4px;top:128.4px;color:#cc0000;">-16.0%</div>
<svg class="ico" style="left:0;top:0" width="242" height="180" viewBox="0 0 242 180"><rect x="4.9" y="158" width="13.8" height="20.75" fill="#e06666"/><rect x="24.77" y="158" width="13.8" height="20.75" fill="#e06666"/><rect x="44.64" y="159.5" width="13.8" height="19.25" fill="#e06666"/><rect x="64.51" y="175.5" width="13.8" height="3.25" fill="#e06666"/><rect x="84.38" y="148.75" width="13.8" height="30" fill="#e06666"/><rect x="104.25" y="170.25" width="13.8" height="8.5" fill="#e06666"/><rect x="124.12" y="178" width="13.8" height="0.75" fill="#e06666"/><rect x="143.99" y="176.25" width="13.8" height="2.5" fill="#e06666"/><rect x="163.86" y="177" width="13.8" height="1.75" fill="#e06666"/><rect x="183.73" y="160.25" width="13.8" height="18.5" fill="#e06666"/><rect x="203.6" y="178" width="13.8" height="0.75" fill="#e06666"/><rect x="223.47" y="148" width="13.8" height="30.75" fill="#008000"/></svg>
</div>
<div class="card" style="left:1035px;top:374px;width:244px;height:182px;">
<div class="hd" style="height:27px;line-height:27.5px;">Unauthorized Access Attempts</div>
<div class="ln" style="top:85px;"></div>
<div class="ln" style="top:145px;"></div>
<div class="abs" style="left:18.5px;top:50.5px;width:21px;height:21px;border-radius:50%;background:#fbbc04;"></div>
<div class="t c big" style="left:150.5px;top:40.1px;">84.2</div>
<div class="t r lab" style="left:132.6px;top:89px;">Target Value:</div>
<div class="t c val" style="left:164.4px;top:89px;color:#000;">79.1</div>
<div class="t r lab" style="left:132.6px;top:106.5px;">Change</div>
<div class="t c val" style="left:164.4px;top:106.5px;color:#cc0000;">+5.1</div>
<svg class="ico" style="left:118.6px;top:127.6px" width="12" height="12" viewBox="0 0 12 12"><path d="M0 12L6 0L12 12z" fill="#cc0000"/></svg>
<div class="t c val" style="left:164.4px;top:128.4px;color:#cc0000;">+6.4%</div>
<svg class="ico" style="left:0;top:0" width="242" height="180" viewBox="0 0 242 180"><rect x="4.9" y="157.25" width="13.8" height="21.5" fill="#e06666"/><rect x="24.77" y="178" width="13.8" height="0.75" fill="#e06666"/><rect x="44.64" y="173.25" width="13.8" height="5.5" fill="#e06666"/><rect x="64.51" y="148" width="13.8" height="30.75" fill="#008000"/><rect x="84.38" y="164.75" width="13.8" height="14" fill="#e06666"/><rect x="104.25" y="177" width="13.8" height="1.75" fill="#e06666"/><rect x="124.12" y="163.25" width="13.8" height="15.5" fill="#e06666"/><rect x="143.99" y="170.25" width="13.8" height="8.5" fill="#e06666"/><rect x="163.86" y="161" width="13.8" height="17.75" fill="#e06666"/><rect x="183.73" y="172" width="13.8" height="6.75" fill="#e06666"/><rect x="203.6" y="175" width="13.8" height="3.75" fill="#e06666"/><rect x="223.47" y="159.25" width="13.8" height="19.5" fill="#e06666"/></svg>
</div>
</div></body></html>
